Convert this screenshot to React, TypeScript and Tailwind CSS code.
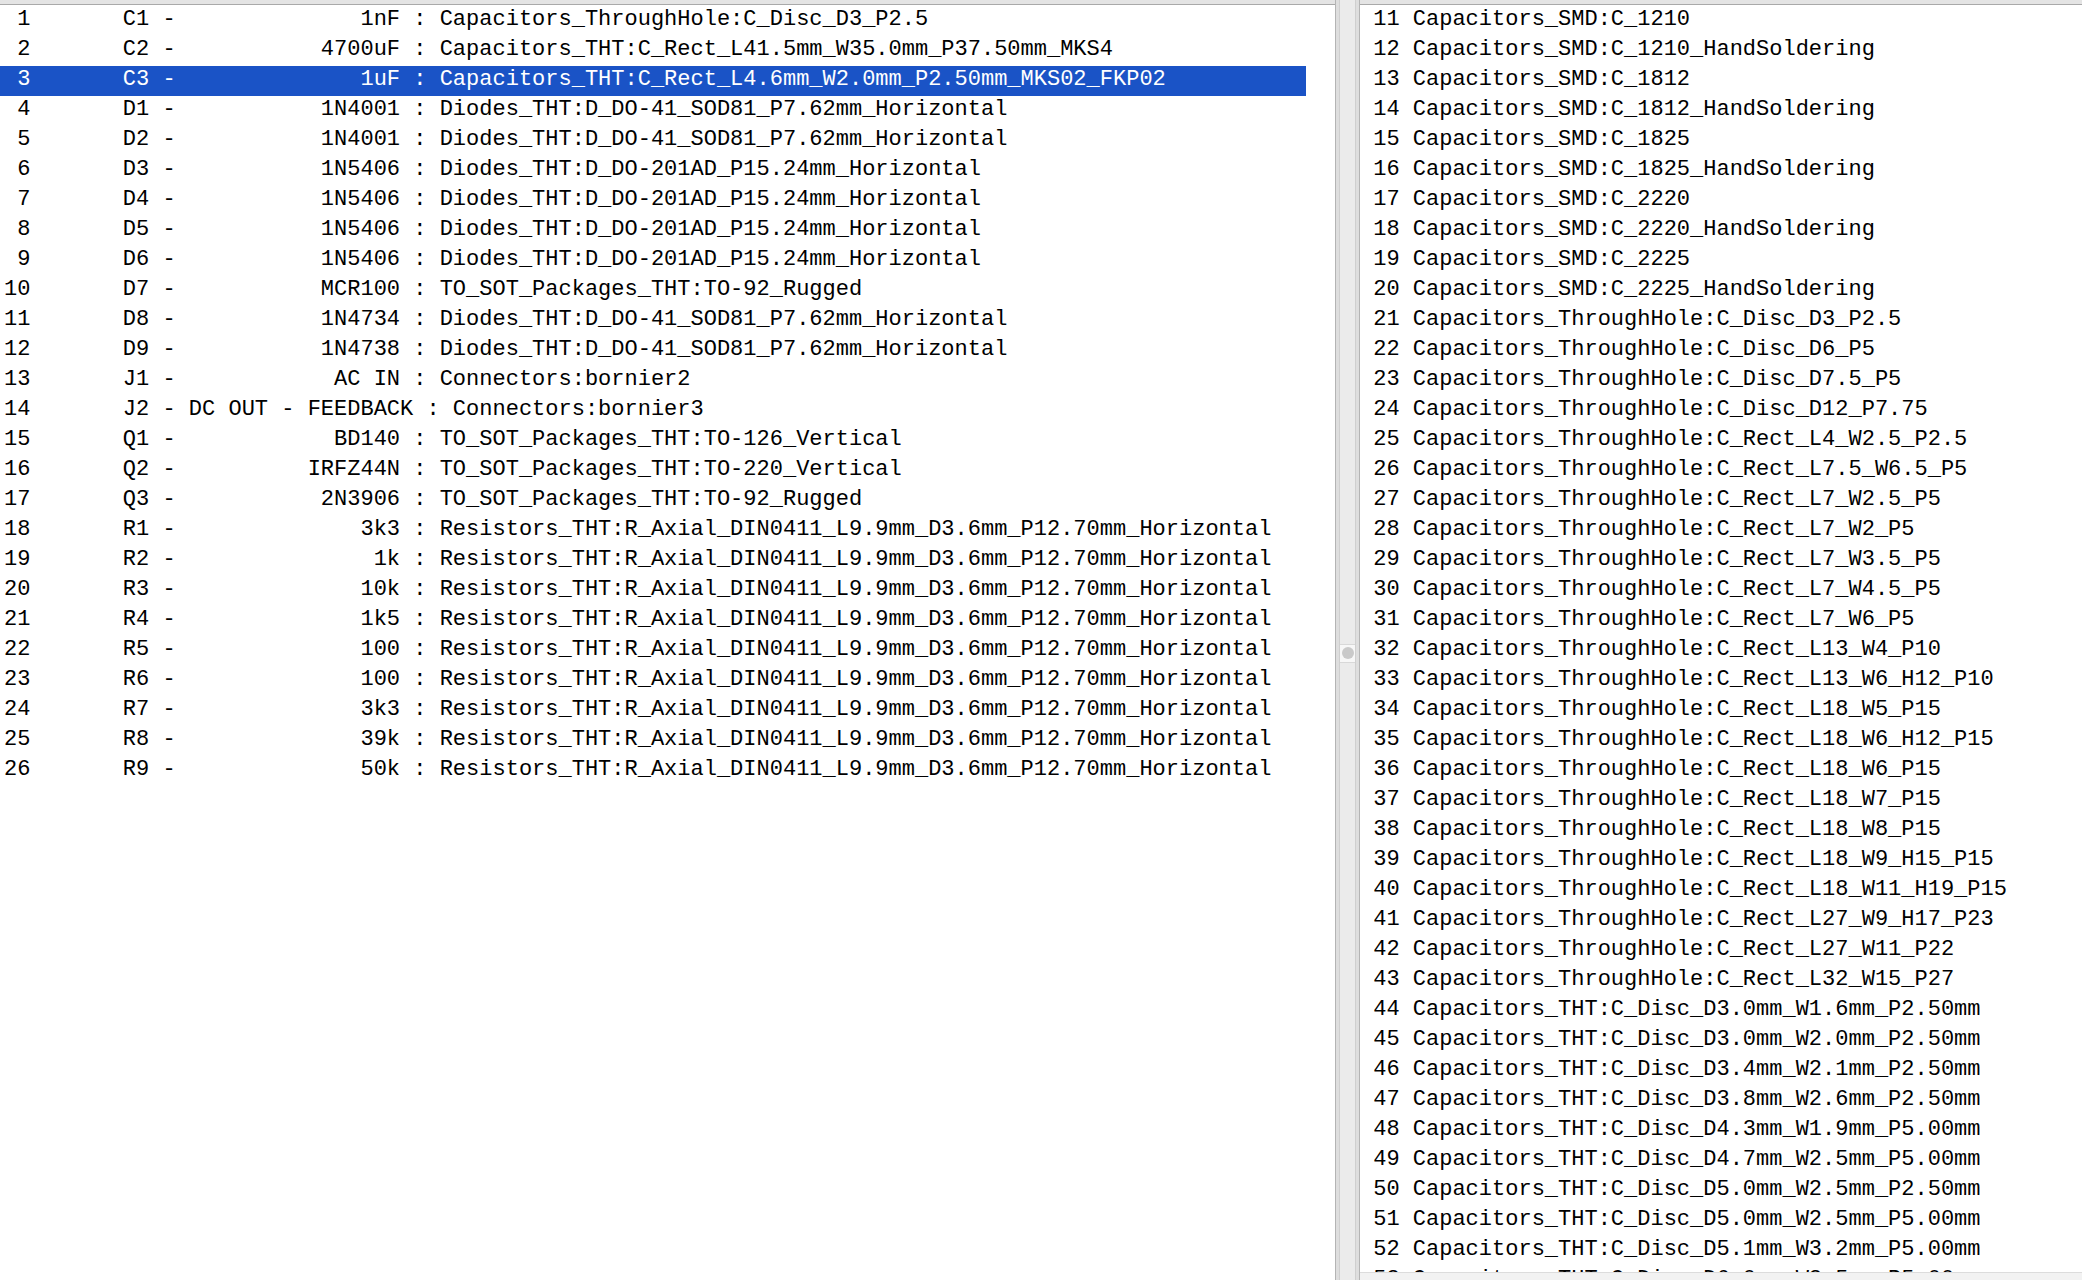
import React from 'react';

type Comp = { ref: string; value: string; fp: string };

const components: Comp[] = [
  { ref: 'C1', value: '1nF', fp: 'Capacitors_ThroughHole:C_Disc_D3_P2.5' },
  { ref: 'C2', value: '4700uF', fp: 'Capacitors_THT:C_Rect_L41.5mm_W35.0mm_P37.50mm_MKS4' },
  { ref: 'C3', value: '1uF', fp: 'Capacitors_THT:C_Rect_L4.6mm_W2.0mm_P2.50mm_MKS02_FKP02' },
  { ref: 'D1', value: '1N4001', fp: 'Diodes_THT:D_DO-41_SOD81_P7.62mm_Horizontal' },
  { ref: 'D2', value: '1N4001', fp: 'Diodes_THT:D_DO-41_SOD81_P7.62mm_Horizontal' },
  { ref: 'D3', value: '1N5406', fp: 'Diodes_THT:D_DO-201AD_P15.24mm_Horizontal' },
  { ref: 'D4', value: '1N5406', fp: 'Diodes_THT:D_DO-201AD_P15.24mm_Horizontal' },
  { ref: 'D5', value: '1N5406', fp: 'Diodes_THT:D_DO-201AD_P15.24mm_Horizontal' },
  { ref: 'D6', value: '1N5406', fp: 'Diodes_THT:D_DO-201AD_P15.24mm_Horizontal' },
  { ref: 'D7', value: 'MCR100', fp: 'TO_SOT_Packages_THT:TO-92_Rugged' },
  { ref: 'D8', value: '1N4734', fp: 'Diodes_THT:D_DO-41_SOD81_P7.62mm_Horizontal' },
  { ref: 'D9', value: '1N4738', fp: 'Diodes_THT:D_DO-41_SOD81_P7.62mm_Horizontal' },
  { ref: 'J1', value: 'AC IN', fp: 'Connectors:bornier2' },
  { ref: 'J2', value: 'DC OUT - FEEDBACK', fp: 'Connectors:bornier3' },
  { ref: 'Q1', value: 'BD140', fp: 'TO_SOT_Packages_THT:TO-126_Vertical' },
  { ref: 'Q2', value: 'IRFZ44N', fp: 'TO_SOT_Packages_THT:TO-220_Vertical' },
  { ref: 'Q3', value: '2N3906', fp: 'TO_SOT_Packages_THT:TO-92_Rugged' },
  { ref: 'R1', value: '3k3', fp: 'Resistors_THT:R_Axial_DIN0411_L9.9mm_D3.6mm_P12.70mm_Horizontal' },
  { ref: 'R2', value: '1k', fp: 'Resistors_THT:R_Axial_DIN0411_L9.9mm_D3.6mm_P12.70mm_Horizontal' },
  { ref: 'R3', value: '10k', fp: 'Resistors_THT:R_Axial_DIN0411_L9.9mm_D3.6mm_P12.70mm_Horizontal' },
  { ref: 'R4', value: '1k5', fp: 'Resistors_THT:R_Axial_DIN0411_L9.9mm_D3.6mm_P12.70mm_Horizontal' },
  { ref: 'R5', value: '100', fp: 'Resistors_THT:R_Axial_DIN0411_L9.9mm_D3.6mm_P12.70mm_Horizontal' },
  { ref: 'R6', value: '100', fp: 'Resistors_THT:R_Axial_DIN0411_L9.9mm_D3.6mm_P12.70mm_Horizontal' },
  { ref: 'R7', value: '3k3', fp: 'Resistors_THT:R_Axial_DIN0411_L9.9mm_D3.6mm_P12.70mm_Horizontal' },
  { ref: 'R8', value: '39k', fp: 'Resistors_THT:R_Axial_DIN0411_L9.9mm_D3.6mm_P12.70mm_Horizontal' },
  { ref: 'R9', value: '50k', fp: 'Resistors_THT:R_Axial_DIN0411_L9.9mm_D3.6mm_P12.70mm_Horizontal' },
];

const footprints = [
  'Capacitors_SMD:C_1210',
  'Capacitors_SMD:C_1210_HandSoldering',
  'Capacitors_SMD:C_1812',
  'Capacitors_SMD:C_1812_HandSoldering',
  'Capacitors_SMD:C_1825',
  'Capacitors_SMD:C_1825_HandSoldering',
  'Capacitors_SMD:C_2220',
  'Capacitors_SMD:C_2220_HandSoldering',
  'Capacitors_SMD:C_2225',
  'Capacitors_SMD:C_2225_HandSoldering',
  'Capacitors_ThroughHole:C_Disc_D3_P2.5',
  'Capacitors_ThroughHole:C_Disc_D6_P5',
  'Capacitors_ThroughHole:C_Disc_D7.5_P5',
  'Capacitors_ThroughHole:C_Disc_D12_P7.75',
  'Capacitors_ThroughHole:C_Rect_L4_W2.5_P2.5',
  'Capacitors_ThroughHole:C_Rect_L7.5_W6.5_P5',
  'Capacitors_ThroughHole:C_Rect_L7_W2.5_P5',
  'Capacitors_ThroughHole:C_Rect_L7_W2_P5',
  'Capacitors_ThroughHole:C_Rect_L7_W3.5_P5',
  'Capacitors_ThroughHole:C_Rect_L7_W4.5_P5',
  'Capacitors_ThroughHole:C_Rect_L7_W6_P5',
  'Capacitors_ThroughHole:C_Rect_L13_W4_P10',
  'Capacitors_ThroughHole:C_Rect_L13_W6_H12_P10',
  'Capacitors_ThroughHole:C_Rect_L18_W5_P15',
  'Capacitors_ThroughHole:C_Rect_L18_W6_H12_P15',
  'Capacitors_ThroughHole:C_Rect_L18_W6_P15',
  'Capacitors_ThroughHole:C_Rect_L18_W7_P15',
  'Capacitors_ThroughHole:C_Rect_L18_W8_P15',
  'Capacitors_ThroughHole:C_Rect_L18_W9_H15_P15',
  'Capacitors_ThroughHole:C_Rect_L18_W11_H19_P15',
  'Capacitors_ThroughHole:C_Rect_L27_W9_H17_P23',
  'Capacitors_ThroughHole:C_Rect_L27_W11_P22',
  'Capacitors_ThroughHole:C_Rect_L32_W15_P27',
  'Capacitors_THT:C_Disc_D3.0mm_W1.6mm_P2.50mm',
  'Capacitors_THT:C_Disc_D3.0mm_W2.0mm_P2.50mm',
  'Capacitors_THT:C_Disc_D3.4mm_W2.1mm_P2.50mm',
  'Capacitors_THT:C_Disc_D3.8mm_W2.6mm_P2.50mm',
  'Capacitors_THT:C_Disc_D4.3mm_W1.9mm_P5.00mm',
  'Capacitors_THT:C_Disc_D4.7mm_W2.5mm_P5.00mm',
  'Capacitors_THT:C_Disc_D5.0mm_W2.5mm_P2.50mm',
  'Capacitors_THT:C_Disc_D5.0mm_W2.5mm_P5.00mm',
  'Capacitors_THT:C_Disc_D5.1mm_W3.2mm_P5.00mm',
  'Capacitors_THT:C_Disc_D6.0mm_W2.5mm_P5.00mm',
];

// same layout as cvpcb's "%3d %8s - %16s : %s", first column trimmed
const cmpLine = (i: number, c: Comp) =>
  `${String(i + 1).padStart(2)} ${c.ref.padStart(8)} - ${c.value.padStart(16)} : ${c.fp}`;

const mono = "font-['Liberation_Mono','DejaVu_Sans_Mono',monospace] text-[22px]";

function PanelTop() {
  return <div className="h-[5px] shrink-0 bg-[#e4e4e4] border-b border-[#a9a9a9]" />;
}

export default function App() {
  const selected = 2;

  return (
    <div className="flex w-[2082px] h-[1280px] overflow-hidden bg-[#ececec] text-[#000]">
      {/* components list */}
      <div className="w-[1335px] flex flex-col bg-white">
        <PanelTop />
        <div className={`flex-1 pt-[1px] ${mono}`}>
          {components.map((c, i) => (
            <div
              key={c.ref}
              className={
                'w-[1306px] h-[30px] pl-[4px] leading-[28px] whitespace-pre ' +
                (i === selected ? 'bg-[#1a53c6] text-white' : '')
              }
            >
              {cmpLine(i, c)}
            </div>
          ))}
        </div>
      </div>

      {/* sash */}
      <div className="w-[25px] flex border-l border-r border-[#b4b4b4]">
        <div className="w-[4px] border-r border-[#cfcfcf] bg-[#dedede]" />
        <div className="flex-1 flex flex-col items-center justify-center pt-[26px] bg-[#ebebeb]">
          <div className="w-[15px] h-[19px] flex items-center justify-center bg-[#f7f7f7] border-y border-[#d8d8d8]">
            <div className="w-[12px] h-[12px] rounded-full bg-[#c9c9c9]" />
          </div>
        </div>
        <div className="w-[4px] border-l border-[#cfcfcf] bg-[#dedede]" />
      </div>

      {/* footprints list */}
      <div className="flex-1 flex flex-col bg-white">
        <PanelTop />
        <div className={`flex-1 overflow-hidden pt-[1px] ${mono}`}>
          {footprints.map((f, i) => (
            <div key={f} className="h-[30px] leading-[28px] whitespace-pre">
              {`${String(i + 11).padStart(3)} ${f}`}
            </div>
          ))}
        </div>
        <div className="h-[8px] shrink-0 bg-[#f2f2f2] border-t border-[#dcdcdc]" />
      </div>
    </div>
  );
}
